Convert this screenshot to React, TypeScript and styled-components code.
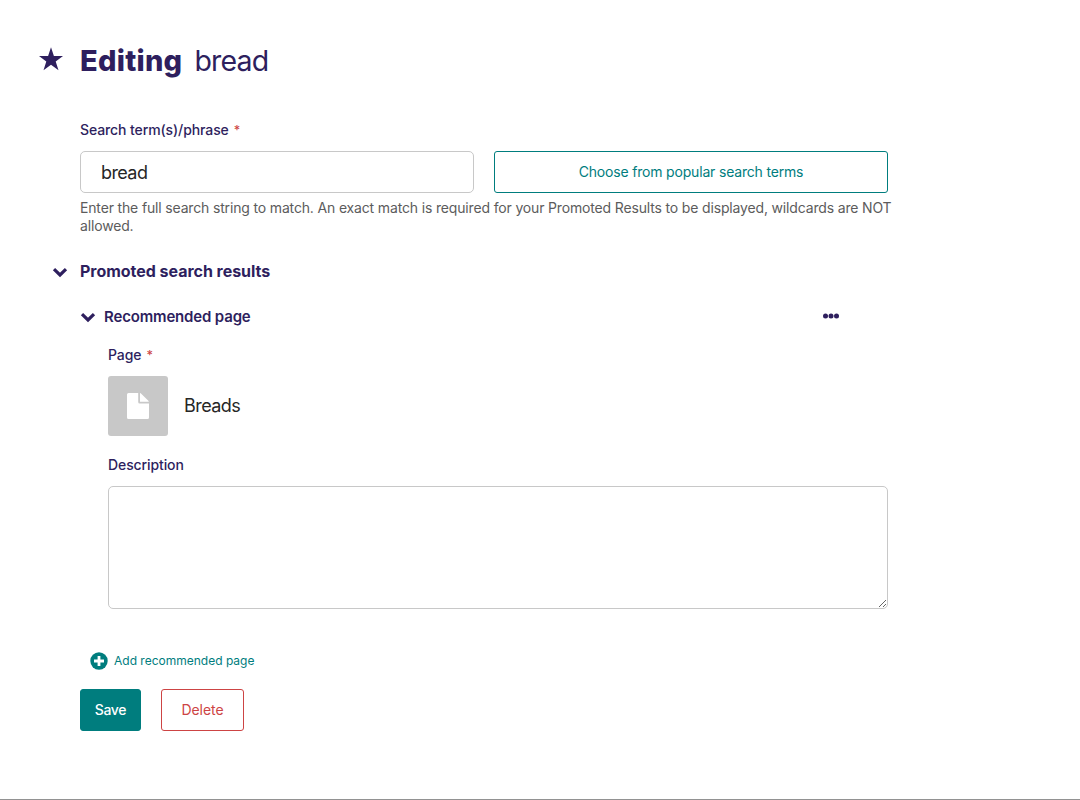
import React from 'react';
import styled, { createGlobalStyle } from 'styled-components';

const color = {
  primary: '#2e1f5e',
  teal: '#007d7e',
  critical: '#cd4444',
  border: '#c8c8c8',
  text: '#262626',
  help: '#5c5c5c',
};

const GlobalStyle = createGlobalStyle`
  * { box-sizing: border-box; }
  body {
    margin: 0;
    background: #fff;
    color: ${color.text};
    font-family: Inter, "Liberation Sans", sans-serif;
    -webkit-font-smoothing: antialiased;
  }
  h1, h2, h3, p { margin: 0; }
  button, input, textarea { font-family: inherit; }
`;

const Page = styled.div`
  height: 800px;
  overflow: hidden;
  display: flex;
  flex-direction: column;
  border-bottom: 1px solid #929292;
`;

const Header = styled.header`
  display: flex;
  align-items: center;
  height: 40px;
  margin-top: 41px;
  padding-left: 39px;
  color: ${color.primary};
`;

const StarIcon = styled.svg`
  width: 24px;
  height: 24px;
  margin: 0 17px 4px 0;
  flex: none;
`;

const Title = styled.h1`
  display: flex;
  align-items: baseline;
  gap: 12px;
  font-size: 29px;
  line-height: 40px;
  font-weight: 800;
  letter-spacing: 0.25px;
`;

const Subject = styled.span`
  font-weight: 400;
  font-size: 28.5px;
  letter-spacing: -0.8px;
`;

const Form = styled.form`
  width: 848px;
  margin: 39px 0 0 40px;
  padding-left: 40px;
  display: flex;
  flex-direction: column;
`;

const Label = styled.label`
  display: block;
  height: 20px;
  line-height: 20px;
  font-size: 14px;
  font-weight: 500;
  letter-spacing: -0.1px;
  color: ${color.primary};
`;

const Required = styled.span`
  margin-left: 5px;
  font-size: 12.5px;
  color: ${color.critical};
`;

const TermRow = styled.div`
  display: grid;
  grid-template-columns: 1fr 1fr;
  gap: 20px;
  margin-top: 11px;
`;

const TextInput = styled.input`
  width: 100%;
  height: 42px;
  padding: 0 20px;
  border: 1px solid ${color.border};
  border-radius: 5px;
  outline: none;
  color: ${color.text};
  font-size: 18px;
  letter-spacing: -0.6px;
`;

const Button = styled.button<{ $tone?: 'teal' | 'critical'; $solid?: boolean; $width?: number }>`
  height: 42px;
  width: ${(p) => (p.$width ? `${p.$width}px` : '100%')};
  padding: 0 0 2px;
  border: 1px solid ${(p) => color[p.$tone ?? 'teal']};
  border-radius: 3px;
  background: ${(p) => (p.$solid ? color[p.$tone ?? 'teal'] : '#fff')};
  color: ${(p) => (p.$solid ? '#fff' : color[p.$tone ?? 'teal'])};
  font-size: 14px;
  font-weight: ${(p) => (p.$solid ? 500 : 400)};
  letter-spacing: ${(p) => (p.$solid ? '-0.35px' : p.$tone === 'critical' ? '-0.05px' : '-0.18px')};
`;

const Help = styled.p`
  width: 820px;
  margin-top: 6px;
  font-size: 14px;
  line-height: 18px;
  letter-spacing: -0.158px;
  color: ${color.help};
`;

const SectionHeader = styled.div`
  display: flex;
  align-items: center;
  gap: 12px;
  height: 24px;
  margin: 24px 0 0 -28px;
  color: ${color.primary};
`;

const SectionTitle = styled.h2`
  font-size: 16px;
  line-height: 24px;
  font-weight: 700;
  letter-spacing: -0.03px;
`;

const ItemHeader = styled.div`
  display: flex;
  align-items: center;
  gap: 8px;
  height: 24px;
  margin-top: 22px;
  padding-right: 48px;
  color: ${color.primary};
`;

const ItemTitle = styled.h3`
  flex: 1;
  font-size: 15px;
  line-height: 24px;
  font-weight: 600;
  letter-spacing: -0.16px;
`;

const Chevron = styled.svg<{ $drop?: number }>`
  width: 16px;
  height: 16px;
  flex: none;
  margin-top: ${(p) => p.$drop ?? 0}px;
`;

const Dots = styled.svg`
  width: 18px;
  height: 6px;
  flex: none;
  margin-bottom: 2px;
`;

const ItemBody = styled.div`
  padding: 16px 0 0 28px;
`;

const Chooser = styled.div`
  display: flex;
  align-items: center;
  gap: 16px;
  height: 60px;
  margin: 11px 0 19px;
  font-size: 18px;
  letter-spacing: -0.56px;
`;

const ChosenTitle = styled.span`
  padding-bottom: 2px;
`;

const Thumb = styled.div`
  width: 60px;
  height: 60px;
  border-radius: 3px;
  background: ${color.border};
  display: flex;
  align-items: center;
  justify-content: center;
`;

const DocIcon = styled.svg`
  width: 22px;
  height: 26px;
`;

const TextArea = styled.textarea`
  display: block;
  width: 780px;
  height: 123px;
  margin-top: 11px;
  padding: 10px 20px;
  border: 1px solid ${color.border};
  border-radius: 5px;
  outline: none;
  resize: vertical;
`;

const AddButton = styled.button`
  display: flex;
  align-items: center;
  gap: 6px;
  height: 24px;
  margin: 40px 0 0 10px;
  padding: 0;
  border: 0;
  background: none;
  color: ${color.teal};
  font-size: 12px;
  letter-spacing: 0;
`;

const AddLabel = styled.span`
  padding-bottom: 1px;
`;

const PlusIcon = styled.svg`
  width: 18px;
  height: 18px;
`;

const Actions = styled.footer`
  display: flex;
  gap: 20px;
  margin-top: 16px;
`;

const ChevronDown = ({ drop }: { drop?: number }) => (
  <Chevron $drop={drop} viewBox="0 0 16 16" fill="none" stroke="currentColor" strokeWidth="3.2" strokeLinejoin="miter">
    <path d="M2 5.2 8 11l6-5.8" />
  </Chevron>
);

export default function App() {
  return (
    <>
      <GlobalStyle />
      <Page>
        <Header>
          <StarIcon viewBox="0 0 24 24" fill="currentColor">
            <path d="M12 .3 14.9 9H24l-7.3 5.4 2.8 8.8L12 17.8l-7.5 5.4 2.8-8.8L0 9h9.1z" />
          </StarIcon>
          <Title>
            Editing <Subject>bread</Subject>
          </Title>
        </Header>
        <Form onSubmit={(e) => e.preventDefault()}>
          <Label htmlFor="term">
            Search term(s)/phrase<Required>*</Required>
          </Label>
          <TermRow>
            <TextInput id="term" defaultValue="bread" />
            <Button type="button">Choose from popular search terms</Button>
          </TermRow>
          <Help>
            Enter the full search string to match. An exact match is required for your Promoted
            Results to be displayed, wildcards are NOT allowed.
          </Help>

          <SectionHeader>
            <ChevronDown drop={2} />
            <SectionTitle>Promoted search results</SectionTitle>
          </SectionHeader>

          <ItemHeader>
            <ChevronDown />
            <ItemTitle>Recommended page</ItemTitle>
            <Dots viewBox="0 0 18 6" fill="currentColor">
              <circle cx="3.5" cy="3" r="2.5" />
              <circle cx="9" cy="3" r="2.5" />
              <circle cx="14.5" cy="3" r="2.5" />
            </Dots>
          </ItemHeader>

          <ItemBody>
            <Label as="div">
              Page<Required>*</Required>
            </Label>
            <Chooser>
              <Thumb>
                <DocIcon viewBox="0 0 22 26" fill="#fff">
                  <path d="M1.5 0H11.2V9q0 1.5 1.5 1.5H22v14q0 1.5-1.5 1.5h-19Q0 26 0 24.5v-23Q0 0 1.5 0z" />
                  <path d="M13 0q.7.2 1.2.7l6.9 6.9q.5.5.7 1.2H13z" />
                </DocIcon>
              </Thumb>
              <ChosenTitle>Breads</ChosenTitle>
            </Chooser>
            <Label htmlFor="description">Description</Label>
            <TextArea id="description" />
          </ItemBody>

          <AddButton type="button">
            <PlusIcon viewBox="0 0 18 18">
              <circle cx="9" cy="9" r="8.7" fill="currentColor" />
              <path d="M9 4v10M4 9h10" stroke="#fff" strokeWidth="2.8" />
            </PlusIcon>
            <AddLabel>Add recommended page</AddLabel>
          </AddButton>
          <Actions>
            <Button $solid $width={61}>Save</Button>
            <Button type="button" $tone="critical" $width={83}>
              Delete
            </Button>
          </Actions>
        </Form>
      </Page>
    </>
  );
}
